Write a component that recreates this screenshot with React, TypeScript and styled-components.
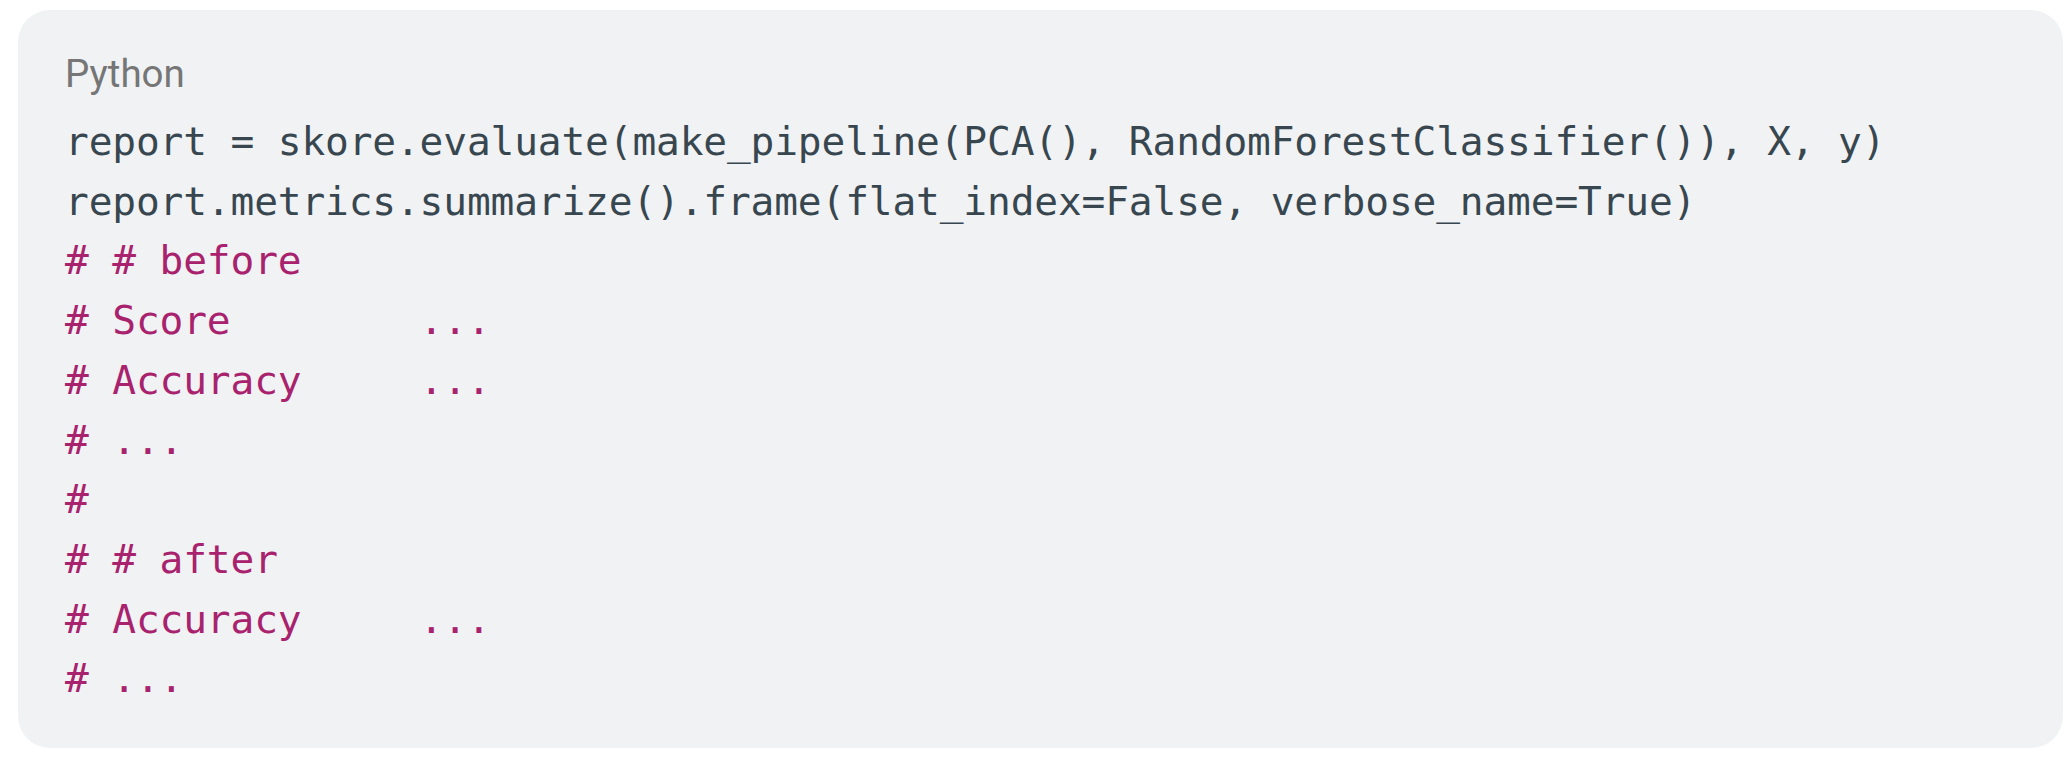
import React from "react";
import styled, { createGlobalStyle } from "styled-components";

const Global = createGlobalStyle`
  html, body { margin: 0; padding: 0; background: #ffffff; }
`;

const Page = styled.div`
  padding: 10px 7px 32px 18px;
`;

const Card = styled.section`
  background: #f1f2f4;
  border-radius: 32px;
  padding: 40px 40px 38px 47px;
  height: 738px;
  box-sizing: border-box;
`;

const Title = styled.div`
  font-family: Roboto, "Liberation Sans", sans-serif;
  font-size: 38.5px;
  line-height: 48px;
  color: #767676;
  margin-bottom: 14px;
`;

const Code = styled.pre`
  margin: 0;
  font-family: "DejaVu Sans Mono", "Liberation Mono", monospace;
  font-size: 39.5px;
  letter-spacing: -0.14px;
  line-height: 59.7px;
  color: #38474f;
  white-space: pre;
`;

const Line = styled.div<{ $comment?: boolean }>`
  color: ${(p) => (p.$comment ? "#a8226d" : "#38474f")};
`;

const lines: { text: string; comment?: boolean }[] = [
  { text: "report = skore.evaluate(make_pipeline(PCA(), RandomForestClassifier()), X, y)" },
  { text: "report.metrics.summarize().frame(flat_index=False, verbose_name=True)" },
  { text: "# # before", comment: true },
  { text: "# Score        ...", comment: true },
  { text: "# Accuracy     ...", comment: true },
  { text: "# ...", comment: true },
  { text: "#", comment: true },
  { text: "# # after", comment: true },
  { text: "# Accuracy     ...", comment: true },
  { text: "# ...", comment: true },
];

export default function App() {
  return (
    <Page>
      <Global />
      <Card>
        <Title>Python</Title>
        <Code>
          {lines.map((l, i) => (
            <Line key={i} $comment={l.comment}>
              {l.text}
            </Line>
          ))}
        </Code>
      </Card>
    </Page>
  );
}
